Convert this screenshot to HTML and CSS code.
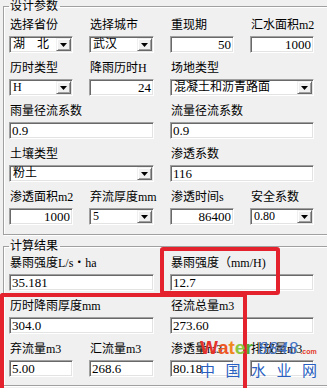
FILE: index.html
```html
<!DOCTYPE html>
<html lang="zh">
<head>
<meta charset="utf-8">
<title>设计参数</title>
<link rel="stylesheet" href="styles.css">
</head>
<body>
<fieldset class="group g1">
  <legend>设计参数</legend>
  <div class="grid">
    <div class="field"><span class="lbl">选择省份</span><div class="combo"><span class="val">湖　北</span><span class="btn"><svg width="7" height="4" viewBox="0 0 7 4"><polygon points="0,0 7,0 3.5,4" fill="#000"/></svg></span></div></div>
    <div class="field"><span class="lbl">选择城市</span><div class="combo"><span class="val">武汉</span><span class="btn"><svg width="7" height="4" viewBox="0 0 7 4"><polygon points="0,0 7,0 3.5,4" fill="#000"/></svg></span></div></div>
    <div class="field"><span class="lbl">重现期</span><div class="input num">50</div></div>
    <div class="field"><span class="lbl">汇水面积m2</span><div class="input num">1000</div></div>

    <div class="field"><span class="lbl">历时类型</span><div class="combo"><span class="val">H</span><span class="btn"><svg width="7" height="4" viewBox="0 0 7 4"><polygon points="0,0 7,0 3.5,4" fill="#000"/></svg></span></div></div>
    <div class="field"><span class="lbl">降雨历时H</span><div class="input num">24</div></div>
    <div class="field span2"><span class="lbl">场地类型</span><div class="combo"><span class="val">混凝土和沥青路面</span><span class="btn"><svg width="7" height="4" viewBox="0 0 7 4"><polygon points="0,0 7,0 3.5,4" fill="#000"/></svg></span></div></div>

    <div class="field span2"><span class="lbl">雨量径流系数</span><div class="input">0.9</div></div>
    <div class="field span2"><span class="lbl">流量径流系数</span><div class="input">0.9</div></div>

    <div class="field span2"><span class="lbl">土壤类型</span><div class="combo"><span class="val">粉土</span><span class="btn"><svg width="7" height="4" viewBox="0 0 7 4"><polygon points="0,0 7,0 3.5,4" fill="#000"/></svg></span></div></div>
    <div class="field span2"><span class="lbl">渗透系数</span><div class="input">116</div></div>

    <div class="field"><span class="lbl">渗透面积m2</span><div class="input num">1000</div></div>
    <div class="field"><span class="lbl">弃流厚度mm</span><div class="combo"><span class="val">5</span><span class="btn"><svg width="7" height="4" viewBox="0 0 7 4"><polygon points="0,0 7,0 3.5,4" fill="#000"/></svg></span></div></div>
    <div class="field"><span class="lbl">渗透时间s</span><div class="input num">86400</div></div>
    <div class="field"><span class="lbl">安全系数</span><div class="combo"><span class="val">0.80</span><span class="btn"><svg width="7" height="4" viewBox="0 0 7 4"><polygon points="0,0 7,0 3.5,4" fill="#000"/></svg></span></div></div>
  </div>
</fieldset>

<fieldset class="group g2">
  <legend>计算结果</legend>
  <div class="grid">
    <div class="field span2"><span class="lbl">暴雨强度L/s・ha</span><div class="input">35.181</div></div>
    <div class="field span2"><span class="lbl">暴雨强度（mm/H)</span><div class="input">12.7</div></div>

    <div class="field span2"><span class="lbl">历时降雨厚度mm</span><div class="input">304.0</div></div>
    <div class="field span2"><span class="lbl">径流总量m3</span><div class="input">273.60</div></div>

    <div class="field"><span class="lbl">弃流量m3</span><div class="input">5.00</div></div>
    <div class="field"><span class="lbl">汇流量m3</span><div class="input">268.6</div></div>
    <div class="field"><span class="lbl">渗透量m3</span><div class="input">80.18</div></div>
    <div class="field"><span class="lbl">排放量m3</span><div class="input"></div></div>
  </div>
</fieldset>

<div class="mark mark1"></div>
<div class="mark mark2"></div>

<div class="watermark">
  <div class="wm-top"><span class="c1">W</span><span class="c2">a</span><span class="c3">t</span><span class="c4">e</span><span class="c5">r</span><span class="num8">8848</span><span class="com">.com</span></div>
  <div class="wm-cn">中国水业网</div>
</div>
</body>
</html>
```

FILE: styles.css
```css
html, body {
  margin: 0;
  padding: 0;
  background: #f0f0f0;
  overflow: hidden;
}
body {
  width: 327px;
  height: 388px;
  position: relative;
  font-family: "Liberation Serif", "Noto Sans CJK SC", serif;
  font-size: 12px;
  color: #000;
}
.group {
  box-sizing: border-box;
  width: 340px;
  min-width: 0;
  margin: 0 0 0 3px;
  padding: 5px 0 9px 5px;
  border: 1px solid #a0a0a0;
  box-shadow: inset 1px 1px 0 #fff, 1px 1px 0 #fff;
}
.g2 {
  margin-top: 5px;
  padding-top: 3px;
  padding-bottom: 8px;
}
.group legend {
  padding: 0 2px 0 1px;
  margin: 0;
  line-height: 13px;
  font-size: 12px;
}
.grid {
  display: grid;
  grid-template-columns: 64px 65px 64px 64px;
  column-gap: 16px;
  row-gap: 8px;
}
.field {
  display: flex;
  flex-direction: column;
  gap: 4px;
}
.span2 { grid-column: span 2; }
.lbl {
  line-height: 14px;
  height: 14px;
  padding-left: 1px;
  white-space: nowrap;
}
.input, .combo {
  box-sizing: border-box;
  height: 17px;
  background: #fff;
  border: 1px solid;
  border-color: #a0a0a0 #fff #fff #a0a0a0;
  box-shadow: inset 1px 1px 0 #696969, inset -1px -1px 0 #e3e3e3;
  display: flex;
  align-items: center;
  font-size: 13px;
  line-height: 13px;
  white-space: nowrap;
}
.combo { font-size: 12px; }
.input {
  padding: 0 2px 0 2px;
}
.input.num {
  justify-content: flex-end;
  padding-right: 2px;
}
.combo {
  padding: 1px 1px 1px 3px;
}
.combo .val {
  flex: 1;
}
.btn {
  box-sizing: border-box;
  width: 15px;
  height: 13px;
  background: #f0f0f0;
  border: 1px solid;
  border-color: #f0f0f0 #696969 #696969 #f0f0f0;
  box-shadow: inset 1px 1px 0 #fff, inset -1px -1px 0 #a0a0a0;
  display: flex;
  align-items: center;
  justify-content: center;
}
.btn svg { display: block; }

.mark {
  position: absolute;
  box-sizing: border-box;
  border: 4px solid #e4222e;
  border-radius: 3px;
}
.mark1 {
  left: 160px;
  top: 247px;
  width: 120px;
  height: 48px;
}
.mark2 {
  left: 0;
  top: 293px;
  width: 247px;
  height: 95px;
  border-bottom-width: 0;
  border-radius: 3px 3px 0 0;
}

.watermark {
  position: absolute;
  left: 200px;
  top: 338px;
  white-space: nowrap;
}
.wm-top {
  display: flex;
  align-items: baseline;
  font-family: "Liberation Sans", sans-serif;
  font-weight: bold;
  font-size: 19px;
  line-height: 19px;
  height: 24px;
}
.c1 { color: #e5322a; }
.c2 { color: #ec5524; }
.c3 { color: #f0861e; }
.c4 { color: #8cc63f; }
.c5 { color: #4fa833; }
.num8 {
  margin-left: 6px;
  font-style: italic;
  font-weight: normal;
  font-size: 16px;
  letter-spacing: 1px;
  color: #4373c4;
}
.com {
  font-size: 7px;
  color: #e23a2a;
  margin-left: 2px;
}
.wm-cn {
  font-family: "Noto Sans CJK SC", sans-serif;
  font-size: 15px;
  line-height: 15px;
  letter-spacing: 10.5px;
  color: #2a5fc2;
}
```
